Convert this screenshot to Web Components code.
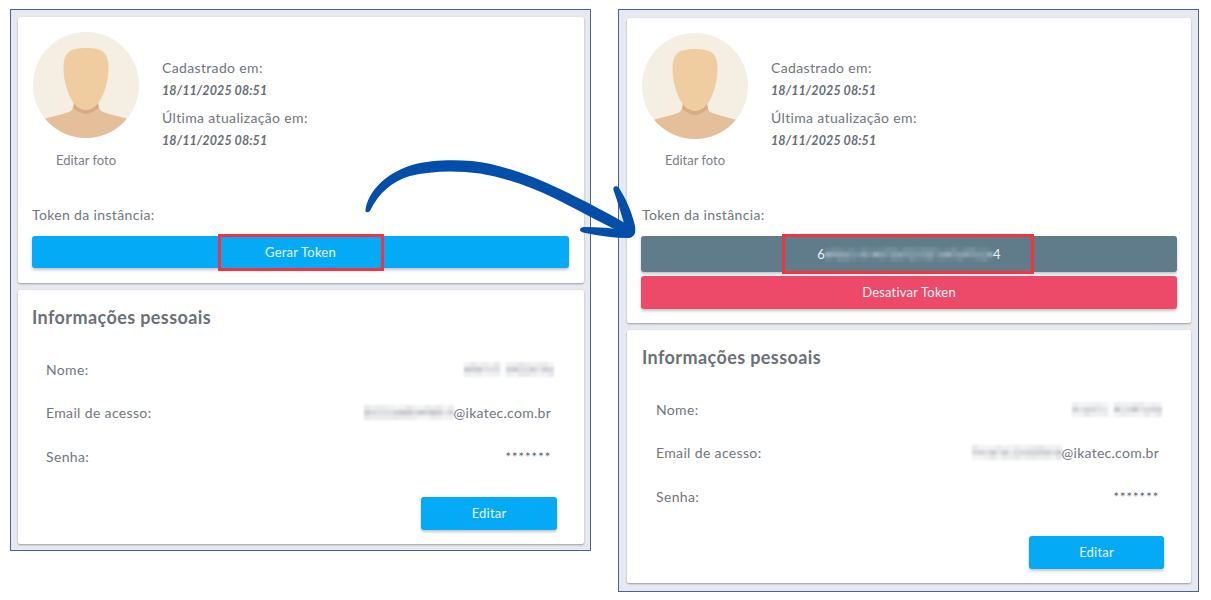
<!DOCTYPE html>
<html lang="pt-BR">
<head>
<meta charset="utf-8">
<title>Perfil</title>
<style>
    html,body{margin:0;background:#fff;}
    body{
        position:relative;
        width:1211px;
        height:600px;
        overflow:hidden;
        font-family:'Lato','Noto Sans',sans-serif;
        color:#71767f;
    }
    .page{
        display:flex;
        align-items:flex-start;
        gap:27px;
        padding:9px 0 0 10px;
    }
</style>
</head>
<body>
<div class="page">
    <app-window style="--pad:7px 6px 6px 7px;--gap:7px">
        <profile-card style="--card-right:15px;--card-foot:15px;--dates-top:26px;--pic-gap:14px;--shift:0px">
            <token-button color="#05aaf6" height="32">
                Gerar Token
                <mark-box slot="mark" style="--left:186px;--width:166px;--top:-2px;--height:37px"></mark-box>
            </token-button>
        </profile-card>
        <personal-card name-seed="3" mail-seed="5" style="--shift:0px;--foot-top:31px;--edit-w:136px"></personal-card>
    </app-window>
    <app-window style="--pad:8px 7px 8px 8px;--gap:7px">
        <profile-card style="--card-right:14px;--card-foot:14px;--dates-top:25px;--pic-gap:13px;--shift:1px">
            <token-button color="#607c8a" height="36">
                <span style="display:inline-flex;align-items:center">6<redact-mask seed="9" cols="28" dark></redact-mask>4</span>
                <mark-box slot="mark" style="--left:141px;--width:252px;--top:-2px;--height:40px"></mark-box>
            </token-button>
            <token-button color="#ec4a68" height="33" style="margin-top:4px;padding-bottom:1px;box-sizing:border-box">Desativar Token</token-button>
        </profile-card>
        <personal-card name-seed="7" mail-seed="11" style="--shift:1px;--foot-top:30px;--edit-w:135px"></personal-card>
    </app-window>
</div>
<curved-arrow></curved-arrow>

<script>
// tiny seeded noise so the blurred blocks stay the same on every run
function noise(seed){
    let s=seed*9301+49297
    return ()=>{
        s=(s*9301+49297)%233280
        return s/233280
    }
}

class AppWindow extends HTMLElement {
    constructor(){
        super()
        this.attachShadow({mode:'open'})
        this.shadowRoot.innerHTML=`
        <style>
            :host{
                display:flex;
                flex-direction:column;
                gap:var(--gap);
                box-sizing:border-box;
                width:581px;
                padding:var(--pad);
                background:#e7e9f1;
                border:1px solid #4c6296;
            }
        </style>
        <slot></slot>`
    }
}

class InfoCard extends HTMLElement {
    constructor(){
        super()
        this.attachShadow({mode:'open'})
        this.shadowRoot.innerHTML=`
        <style>
            :host{
                display:block;
                background:#fff;
                border-radius:2px;
                box-shadow:0 1px 2px rgba(60,60,70,.45);
            }
        </style>
        <slot></slot>`
    }
}

class UserAvatar extends HTMLElement {
    constructor(){
        super()
        this.attachShadow({mode:'open'})
        this.shadowRoot.innerHTML=`
        <style>
            :host{display:block;width:106px;height:106px;}
            svg{display:block;}
        </style>
        <svg width="106" height="106" viewBox="0 0 106 106">
            <defs><clipPath id="c"><circle cx="53" cy="53" r="53"/></clipPath></defs>
            <circle cx="53" cy="53" r="53" fill="#f4eee3"/>
            <g clip-path="url(#c)">
                <path d="M0 91 C14 85 28 83 36 80 C40 78 41 74 41 68 L65 68 C65 74 66 78 70 80 C78 83 92 85 106 91 L106 106 L0 106 Z" fill="#e4bf99"/>
                <path d="M41 68 L65 68 C65 72 66 75 66 76 C60 80 56 82 53 82 C50 82 46 80 40 76 C41 74 41 72 41 68 Z" fill="#d6ab85"/>
                <path d="M53 16 C69 16 75.500 20 75.500 36 C75.500 52 68 78 53 78 C38 78 30.500 52 30.500 36 C30.500 20 37 16 53 16 Z" fill="#f0cda0"/>
            </g>
        </svg>`
    }
}

class RedactMask extends HTMLElement {
    constructor(){
        super()
        this.attachShadow({mode:'open'})
        const cols=+this.getAttribute('cols')||15
        const gap=+this.getAttribute('gap')||-1
        const dark=this.hasAttribute('dark')
        const rnd=noise(+this.getAttribute('seed')||1)
        let cells=''
        for(let r=0;r<3;r++){
            for(let c=0;c<cols;c++){
                const n=rnd()
                let col
                if(dark){
                    const a=r==1?.2+n*.35:.04+n*.18
                    col=`rgba(190,210,220,${a.toFixed(2)})`
                }else{
                    let a=r==1?.16+n*.22:.07+n*.1
                    if(c==gap) a=.03
                    col=`rgba(110,115,130,${a.toFixed(2)})`
                }
                cells+=`<i style="background:${col}"></i>`
            }
        }
        this.shadowRoot.innerHTML=`
        <style>
            :host{display:inline-block;vertical-align:middle;}
            div{
                display:grid;
                grid-template-columns:repeat(${cols},6px);
                grid-auto-rows:5px;
                filter:blur(.8px);
            }
        </style>
        <div>${cells}</div>`
    }
}

class MarkBox extends HTMLElement {
    constructor(){
        super()
        this.attachShadow({mode:'open'})
        this.shadowRoot.innerHTML=`
        <style>
            :host{
                position:absolute;
                box-sizing:border-box;
                left:var(--left);
                top:var(--top);
                width:var(--width);
                height:var(--height);
                border:3px solid #f3343f;
            }
        </style>`
    }
}

class TokenButton extends HTMLElement {
    constructor(){
        super()
        this.attachShadow({mode:'open'})
        const h=this.getAttribute('height')||32
        const color=this.getAttribute('color')
        this.shadowRoot.innerHTML=`
        <style>
            :host{
                position:relative;
                display:flex;
                align-items:center;
                justify-content:center;
                height:${h}px;
                background:${color};
                color:#e9f4fa;
                border-radius:3px;
                font-size:13px;
                letter-spacing:.2px;
                box-shadow:0 2px 3px rgba(60,60,70,.3);
            }
        </style>
        <slot></slot><slot name="mark"></slot>`
    }
}

class ProfileCard extends HTMLElement {
    constructor(){
        super()
        this.attachShadow({mode:'open'})
        this.shadowRoot.innerHTML=`
        <style>
            :host{display:block;}
            info-card{padding:15px var(--card-right) var(--card-foot) 14px;}
            .top{display:flex;gap:23px;}
            .pic{display:flex;flex-direction:column;align-items:center;margin-left:1px;}
            .pic span{margin-top:var(--pic-gap);font-size:13px;line-height:16px;color:#7c8089;}
            .dates{display:flex;flex-direction:column;padding-top:var(--dates-top);}
            .lbl{font-size:14px;line-height:20px;letter-spacing:.35px;}
            .val{font-size:12.5px;line-height:20px;font-weight:700;font-style:italic;letter-spacing:.1px;color:#686d76;margin:3px 0 7px;}
            .token{margin:37px 0 11px var(--shift);font-size:14px;line-height:20px;letter-spacing:.35px;}
        </style>
        <info-card>
            <div class="top">
                <div class="pic"><user-avatar></user-avatar><span>Editar foto</span></div>
                <div class="dates">
                    <div class="lbl">Cadastrado em:</div>
                    <div class="val">18/11/2025 08:51</div>
                    <div class="lbl">Última atualização em:</div>
                    <div class="val">18/11/2025 08:51</div>
                </div>
            </div>
            <div class="token">Token da instância:</div>
            <slot></slot>
        </info-card>`
    }
}

class PersonalCard extends HTMLElement {
    constructor(){
        super()
        this.attachShadow({mode:'open'})
        const nameSeed=this.getAttribute('name-seed')
        const mailSeed=this.getAttribute('mail-seed')
        this.shadowRoot.innerHTML=`
        <style>
            :host{display:block;}
            info-card{padding:15px 14px 14px 14px;}
            h2{margin:0 0 0 var(--shift);font-size:18px;line-height:24px;font-weight:700;color:#6b7079;letter-spacing:.4px;}
            .rows{display:flex;flex-direction:column;gap:23.5px;margin:30px calc(19px - var(--shift)) 0 calc(14px + var(--shift));}
            .row{display:flex;justify-content:space-between;align-items:center;height:20px;font-size:14px;letter-spacing:.35px;}
            .name{margin-right:-3px;}
            .val{display:flex;align-items:center;letter-spacing:.27px;}
            .stars{letter-spacing:.6px;color:#666b74;}
            .foot{display:flex;justify-content:flex-end;margin:var(--foot-top) 13px 0 0;}
            .edit{
                display:flex;align-items:center;justify-content:center;
                box-sizing:border-box;
                width:var(--edit-w);height:33px;padding-bottom:2px;
                background:#05aaf6;color:#e9f4fa;border-radius:3px;
                font-size:13px;letter-spacing:.2px;
                box-shadow:0 2px 3px rgba(60,60,70,.3);
            }
        </style>
        <info-card>
            <h2>Informações pessoais</h2>
            <div class="rows">
                <div class="row"><span>Nome:</span><redact-mask class="name" seed="${nameSeed}" cols="15" gap="6"></redact-mask></div>
                <div class="row"><span>Email de acesso:</span><span class="val"><redact-mask seed="${mailSeed}" cols="15"></redact-mask>@ikatec.com.br</span></div>
                <div class="row"><span>Senha:</span><span class="stars">*******</span></div>
            </div>
            <div class="foot"><div class="edit">Editar</div></div>
        </info-card>`
    }
}

class CurvedArrow extends HTMLElement {
    constructor(){
        super()
        this.attachShadow({mode:'open'})
        this.shadowRoot.innerHTML=`
        <style>
            :host{position:absolute;left:0;top:0;width:1211px;height:600px;pointer-events:none;}
            svg{display:block;}
        </style>
        <svg width="1211" height="600" viewBox="0 0 1211 600" fill="#034ea9">
            <path d="M365.5 210 C368 192 384 174 412 165 C430 160 452 159.500 472 161 C500 164 530 175 560 189 C585 201 610 214 632 227 L630 237 C610 227 585 214 556 199 C530 186 505 178 480 173.500 C455 170 430 171 410 176 C392 181 378 194 370.500 210 C369 213 365 213 365.500 210 Z"/>
            <path d="M613.500 190 C612.500 186 617 185 619 188 C626 199 632 212 635 226 C636 232 635 237 629 238 C614 238 598 236 583 232.500 C578 231 580 227 584 227 C597 227 612 228 626 230 C622 216 618 203 613.500 190 Z"/>
        </svg>`
    }
}

// children first, so nested tags are upgraded with their slots ready
customElements.define('info-card', InfoCard)
customElements.define('user-avatar', UserAvatar)
customElements.define('redact-mask', RedactMask)
customElements.define('mark-box', MarkBox)
customElements.define('token-button', TokenButton)
customElements.define('profile-card', ProfileCard)
customElements.define('personal-card', PersonalCard)
customElements.define('app-window', AppWindow)
customElements.define('curved-arrow', CurvedArrow)
</script>
</body>
</html>
